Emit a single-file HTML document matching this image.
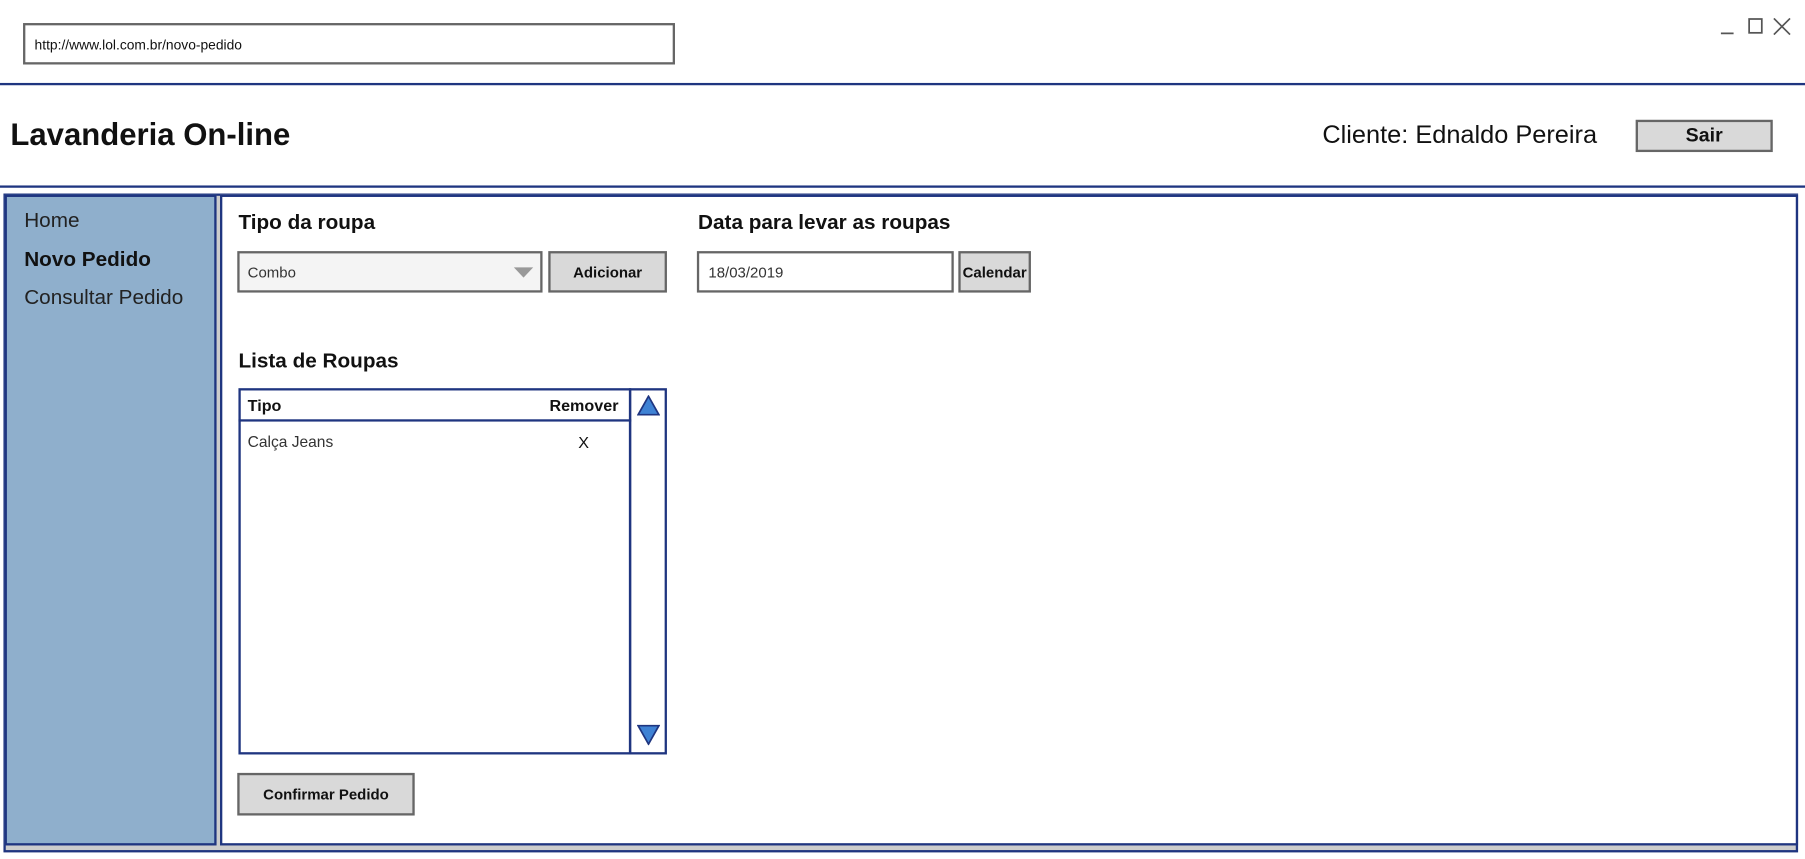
<!DOCTYPE html>
<html><head><meta charset="utf-8"><style>
html,body{margin:0;padding:0;background:#fff;overflow:hidden}
body{width:1805px;height:859px}
#w{position:absolute;left:0;top:0;width:1567px;height:746px;transform:scale(1.15188);transform-origin:0 0;font-family:"Liberation Sans",Arial,sans-serif;color:#111}
.a{position:absolute;box-sizing:border-box}
.btn{background:#d9d9d9;border:2px solid #666;font-weight:bold;display:flex;align-items:center;justify-content:center}
.t{position:absolute;white-space:nowrap;line-height:1}
</style></head><body><div id="w">
<div class="a" style="left:20px;top:20px;width:566px;height:36px;border:2px solid #666;"></div>
<div class="t" style="left:30px;top:33px;font-size:12px">http://www.lol.com.br/novo-pedido</div>
<svg class="a" style="left:1490px;top:12px" width="70" height="22" viewBox="0 0 70 22"><line x1="4" y1="17" x2="15" y2="17" stroke="#555" stroke-width="1.5"/><rect x="28.5" y="4.5" width="11" height="12" fill="none" stroke="#555" stroke-width="1.5"/><path d="M50 4L64 18M64 4L50 18" stroke="#555" stroke-width="1.5"/></svg>
<div class="a" style="left:0;top:72px;width:1567px;height:2px;background:#1f3580"></div>
<div class="t" style="left:9px;top:104px;font-size:27px;font-weight:bold">Lavanderia On-line</div>
<div class="t" style="left:1148px;top:106px;font-size:22px">Cliente: Ednaldo Pereira</div>
<div class="a btn" style="left:1420px;top:104px;width:119px;height:28px;font-size:17px">Sair</div>
<div class="a" style="left:0;top:161px;width:1567px;height:2px;background:#1f3580"></div>
<div class="a" style="left:3px;top:168px;width:1558px;height:572px;border:2px solid #1f3580;background:#ccc"></div>
<div class="a" style="left:4px;top:169px;width:184px;height:565px;border:2px solid #1f3580;background:#8fafcc"></div>
<div class="a" style="left:191px;top:169px;width:1370px;height:565px;border:2px solid #1f3580;background:#fff"></div>
<div class="t" style="left:21px;top:182px;font-size:18px;color:#222">Home</div>
<div class="t" style="left:21px;top:216px;font-size:18px;font-weight:bold">Novo Pedido</div>
<div class="t" style="left:21px;top:249px;font-size:18px;color:#222">Consultar Pedido</div>
<div class="t" style="left:207px;top:184px;font-size:18px;font-weight:bold">Tipo da roupa</div>
<div class="a" style="left:206px;top:218px;width:265px;height:36px;border:2px solid #666;background:#f4f4f4"></div>
<div class="t" style="left:215px;top:230px;font-size:13px;color:#333">Combo</div>
<svg class="a" style="left:446px;top:232px" width="17" height="9"><path d="M0 0H17L8.5 9Z" fill="#999"/></svg>
<div class="a btn" style="left:476px;top:218px;width:103px;height:36px;font-size:13px">Adicionar</div>
<div class="t" style="left:606px;top:184px;font-size:18px;font-weight:bold">Data para levar as roupas</div>
<div class="a" style="left:605px;top:218px;width:223px;height:36px;border:2px solid #666;background:#fff"></div>
<div class="t" style="left:615px;top:230px;font-size:13px;color:#333">18/03/2019</div>
<div class="a btn" style="left:832px;top:218px;width:63px;height:36px;font-size:13px">Calendar</div>
<div class="t" style="left:207px;top:304px;font-size:18px;font-weight:bold">Lista de Roupas</div>
<div class="a" style="left:207px;top:337px;width:341px;height:318px;border:2px solid #1f3580"></div>
<div class="a" style="left:207px;top:364px;width:341px;height:2px;background:#1f3580"></div>
<div class="a" style="left:546px;top:337px;width:33px;height:318px;border:2px solid #1f3580"></div>
<div class="t" style="left:215px;top:345px;font-size:14px;font-weight:bold">Tipo</div>
<div class="t" style="left:477px;top:345px;font-size:14px;font-weight:bold">Remover</div>
<div class="t" style="left:215px;top:377px;font-size:13.5px;color:#333">Calça Jeans</div>
<div class="t" style="left:502px;top:377px;font-size:14px">X</div>
<svg class="a" style="left:553px;top:343px" width="20" height="18"><path d="M10 1L19 17H1Z" fill="#3f82d4" stroke="#1f3580" stroke-width="1.5"/></svg>
<svg class="a" style="left:553px;top:629px" width="20" height="18"><path d="M1 1H19L10 17Z" fill="#3f82d4" stroke="#1f3580" stroke-width="1.5"/></svg>
<div class="a btn" style="left:206px;top:671px;width:154px;height:37px;font-size:13px">Confirmar Pedido</div>
</div></body></html>
